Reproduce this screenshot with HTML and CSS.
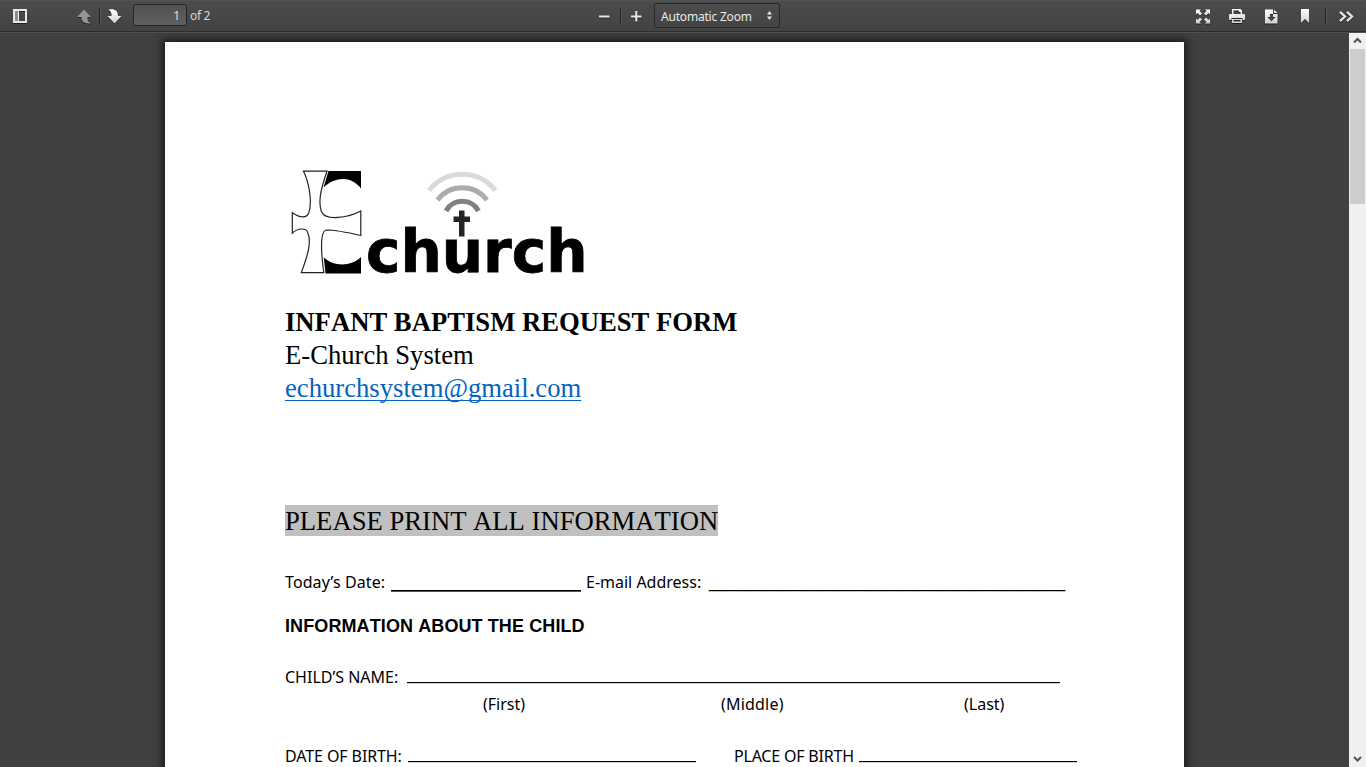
FILE: index.html
```html
<!DOCTYPE html>
<html lang="en">
<head>
<meta charset="utf-8">
<title>Infant Baptism Request Form</title>
<link rel="stylesheet" href="styles.css">
</head>
<body>
<header class="toolbar">
  <svg width="0" height="0" class="defs"><defs><linearGradient id="g" x1="0" y1="0" x2="0" y2="1"><stop offset="0" stop-color="#fff"/><stop offset="1" stop-color="#d0d0d0"/></linearGradient></defs></svg>
  <div class="group left">
    <svg class="icon sidebar" width="14" height="14" viewBox="0 0 14 14"><rect x="1" y="1" width="12" height="12" fill="none" stroke="#e8e8e8" stroke-width="2"/><path d="M2 2h3v10H2z" fill="#8e8e8e"/><path d="M5 2h1v10H5z" fill="#eee"/></svg>
    <svg class="icon up" width="15" height="15" viewBox="0 0 15 15"><path d="M7 0.500 14 8h-3.500c-.2 3 .4 5 3 6.200-5 .8-9-.6-9-6.200H0z" fill="#959595"/></svg>
    <i class="sep"></i>
    <svg class="icon down" width="15" height="15" viewBox="0 0 15 15"><path d="M7.500 14.500 14.500 7H11c0-5.600-4-7.500-9.500-6.300C4 2 4.700 4 4.500 7H.5z" fill="url(#g)"/></svg>
    <span class="page-field">1</span>
    <span class="label">of 2</span>
  </div>
  <div class="group center">
    <svg class="icon" width="11" height="11" viewBox="0 0 11 11"><path d="M0 4.500h10.500v2H0z" fill="#e8e8e8"/></svg>
    <i class="sep"></i>
    <svg class="icon" width="11" height="11" viewBox="0 0 11 11"><path d="M0 4.500h10.500v2H0zM4.300 0h2v10.500h-2z" fill="#e8e8e8"/></svg>
    <span class="zoom-select"><span>Automatic Zoom</span><svg width="5" height="9" viewBox="0 0 5 9"><path d="M0 3.500 2.500 0 5 3.500zM0 5.500 2.500 9 5 5.500z" fill="#e4e4e4"/></svg></span>
  </div>
  <div class="group right">
    <svg class="icon" width="16" height="15" viewBox="-.5 0 16 15"><path d="M0.500 0.500h5L4 2l2.500 2.500-2 2L2 4 .500 5.500zM14.500.500v5L13 4l-2.500 2.500-2-2L11 2 9.500.500zM.500 14.500v-5L2 11l2.500-2.500 2 2L4 13l1.500 1.500zM14.500 14.500h-5L11 13l-2.500-2.500 2-2L13 11l1.500-1.500z" fill="url(#g)"/></svg>
    <svg class="icon" width="16" height="14" viewBox="0 0 16 14"><path d="M3 5V0h8.500L13 1.500V5h2q1 0 1 1v4q0 1-1 1h-1.500V9h-11v2H1q-1 0-1-1V6q0-1 1-1zm1.500 0h7V3H10V1.500H4.500zM3 10h10v4H3zm1.500 1v1.500h7V11z" fill="url(#g)" fill-rule="evenodd"/></svg>
    <svg class="icon" width="16" height="15" viewBox="-2 0 16 15"><path d="M0 .500h8V5h4.500v9.500H0zM5 5v3H2.500l4 4.500 4-4.500H8V5z" fill="url(#g)" fill-rule="evenodd"/><path d="M9 .500 12.500 4H9z" fill="#e8e8e8"/></svg>
    <svg class="icon" width="16" height="14" viewBox="-4 0 16 14"><path d="M0 0h8v14l-4-4-4 4z" fill="url(#g)"/></svg>
    <i class="sep"></i>
    <svg class="icon" width="15" height="11" viewBox="0 0 15 11"><path d="M1 .800 6 5.500 1 10.200M8 .800l5 4.700-5 4.700" fill="none" stroke="#e4e4e4" stroke-width="2.300"/></svg>
  </div>
</header>
<main class="viewer">
  <article class="sheet">
    <svg class="logo" width="310" height="120" viewBox="285 165 310 120">
      <path d="M303.500 171.200h23.500c-4 12-10 29-5.500 40.500 4 9.500 27 6 39.300-.7v24.500c-15-3.500-26-5.500-34-5.500-8.500.5-4.500 32-3 42.700h-22.500c4.200-12 11.200-29 6.500-40-1.500-5-10-5-15.500.5v-20.500c8 5.500 14.500 5.500 16.500 0 4-12-.5-32-5.300-41.500z" fill="#fff" stroke="#222" stroke-width="1.200"/>
      <path d="M328.500 171H361v17.500c-9-12-24.500-13-37.500-1z"/>
      <path d="M323.800 257.500c10 9.500 28 9 37.200-.5v16.500h-35.500z"/>
      <g fill="none" stroke-width="5">
        <path d="M429 190.500A42 42 0 0 1 495.500 190.500" stroke="#dadadc"/>
        <path d="M437.500 200A31 31 0 0 1 487 200" stroke="#acacae"/>
        <path d="M446 211A18.500 18.500 0 0 1 478.500 211" stroke="#808082"/>
      </g>
      <text class="wordmark" x="366" y="272" textLength="221.500" lengthAdjust="spacingAndGlyphs">church</text>
      <path d="M459 210.500h5.500v6h5.500v5.500h-5.500v14.500H459V222h-5.500v-5.500h5.500z" fill="#252525"/>
    </svg>
    <section class="intro">
      <h1>INFANT BAPTISM REQUEST FORM</h1>
      <p>E-Church System</p>
      <a>echurchsystem@gmail.com</a>
    </section>
    <p class="notice"><mark>PLEASE PRINT ALL INFORMATION</mark></p>
    <div class="row today"><span class="t-date">Today’s Date:</span><i class="rule r-date"></i><span class="t-mail">E-mail Address:</span><span class="blanks">_______________________________________</span></div>
    <h2>INFORMATION ABOUT THE CHILD</h2>
    <div class="row child"><span class="t-child">CHILD’S NAME:</span><i class="rule r-child"></i></div>
    <div class="row hints"><span class="t-first">(First)</span><span class="t-middle">(Middle)</span><span class="t-last">(Last)</span></div>
    <div class="row birth"><span class="t-dob">DATE OF BIRTH:</span><i class="rule r-dob"></i><span class="t-pob">PLACE OF BIRTH</span><i class="rule r-pob"></i></div>
  </article>
  <aside class="scrollbar">
    <svg width="17" height="17" viewBox="0 0 17 17"><path d="M5 10.500 8.500 7l3.500 3.500" fill="none" stroke="#505050" stroke-width="2"/></svg>
    <i class="thumb"></i>
    <svg width="17" height="17" viewBox="0 0 17 17"><path d="M5 7l3.500 3.500L12 7" fill="none" stroke="#505050" stroke-width="2"/></svg>
  </aside>
</main>
</body>
</html>
```
FILE: styles.css
```css
* { box-sizing: border-box; }
body { margin: 0; height: 767px; overflow: hidden; display: flex; flex-direction: column; background: #404040; font-family: "Noto Sans", sans-serif; }
h1, h2, p { margin: 0; }
.defs { position: absolute; }
.toolbar { height: 32px; flex: none; display: flex; background: linear-gradient(#555 0, #4b4b4b 2px, #434343 100%); border-bottom: 1px solid #2c2c2c; box-shadow: 0 1px 0 #505050; z-index: 1; }
.group { display: flex; align-items: center; height: 32px; }
.icon { flex: none; display: block; filter: drop-shadow(0 1px 0 #222); }
.sep { width: 1px; height: 17px; background: #202020; box-shadow: 1px 0 0 #585858; flex: none; }
.left { width: 599px; padding-left: 13px; }
.up { margin: 0 7px 0 50px; }
.down { margin-left: 7px; }
.page-field { width: 54px; height: 22px; margin: 0 3px 2px 11px; border: 1px solid #252525; border-radius: 2px; background: linear-gradient(#515151, #606060); color: #e0e0e0; font-size: 12px; line-height: 22px; text-align: right; padding-right: 6px; }
.label { color: #d8d8d8; font-size: 12px; letter-spacing: -0.3px; line-height: 32px; height: 32px; }
.center { width: 596px; }
.center .sep { margin: 0 10px; }
.zoom-select { display: flex; justify-content: space-between; align-items: center; width: 126px; height: 25px; margin: 0 0 2px 12px; padding: 1px 7px 0 6px; border: 1px solid #292929; border-radius: 2px; background: linear-gradient(#4c4c4c, #444); color: #e8e8e8; font-size: 12px; letter-spacing: -0.2px; }
.zoom-select span { padding-top: 2px; }
.right { gap: 18px; }
.right .sep { margin: 0 -5px 0 -6px; }
.viewer { position: relative; flex: 1; display: flex; justify-content: space-between; overflow: hidden; background: #404040; padding-left: 165px; }
.sheet { width: 1019px; height: 1318px; margin-top: 10px; padding: 123px 0 0 120px; background: #fff; box-shadow: 0 0 8px 3px #1c1c1c; color: #000; flex: none; }
.logo { display: block; }
.wordmark { font: bold 59px "DejaVu Sans", sans-serif; stroke: #000; stroke-width: 0.8px; }
.intro, .notice { font-family: "Liberation Serif", serif; font-size: 26.67px; line-height: 33px; font-kerning: none; }
.intro { padding-top: 21px; height: 220px; }
h1 { font-size: inherit; line-height: inherit; }
.intro a { display: inline-block; color: #0563c1; text-decoration: underline; text-decoration-thickness: 1px; text-decoration-skip-ink: none; text-underline-offset: 3px; }
.notice { line-height: 32px; height: 31px; }
mark { display: inline-block; height: 31px; background: #c0c0c0; color: #000; }
.row { display: flex; height: 22px; line-height: 22px; font-size: 16px; white-space: nowrap; }
.row span { flex: none; }
.rule { height: 1px; background: #000; box-shadow: 0 1px 0 #d0d0d0; flex: none; }
.today { margin-top: 35px; }
.t-date { width: 106px; letter-spacing: 0.1px; }
.r-date { width: 190px; margin-top: 19px; box-shadow: 0 1px 0 #555; }
.t-mail { margin-left: 5px; width: 123px; }
.blanks { font-family: "Liberation Sans", sans-serif; font-size: 16.430px; }
h2 { margin-top: 22px; height: 21px; font: bold 18px/22px "Liberation Sans", sans-serif; letter-spacing: 0.1px; font-kerning: none; }
.child { margin-top: 30px; }
.t-child { width: 122px; }
.r-child { width: 653px; margin-top: 16px; }
.hints { margin-top: 5px; padding-left: 198px; }
.t-first { width: 238px; }
.t-middle { width: 243px; letter-spacing: 0.2px; }
.birth { margin-top: 30px; }
.t-dob { width: 123px; letter-spacing: -0.1px; }
.r-dob { width: 288px; margin-top: 16px; }
.t-pob { margin-left: 38px; width: 125px; letter-spacing: -0.2px; }
.r-pob { width: 218px; margin-top: 16px; }
.scrollbar { display: flex; flex-direction: column; width: 17px; background: #f0f0f0; flex: none; }
.scrollbar svg { display: block; }
.thumb { width: 15px; height: 155px; margin: 0 1px auto; background: #cdcdcd; }
```
